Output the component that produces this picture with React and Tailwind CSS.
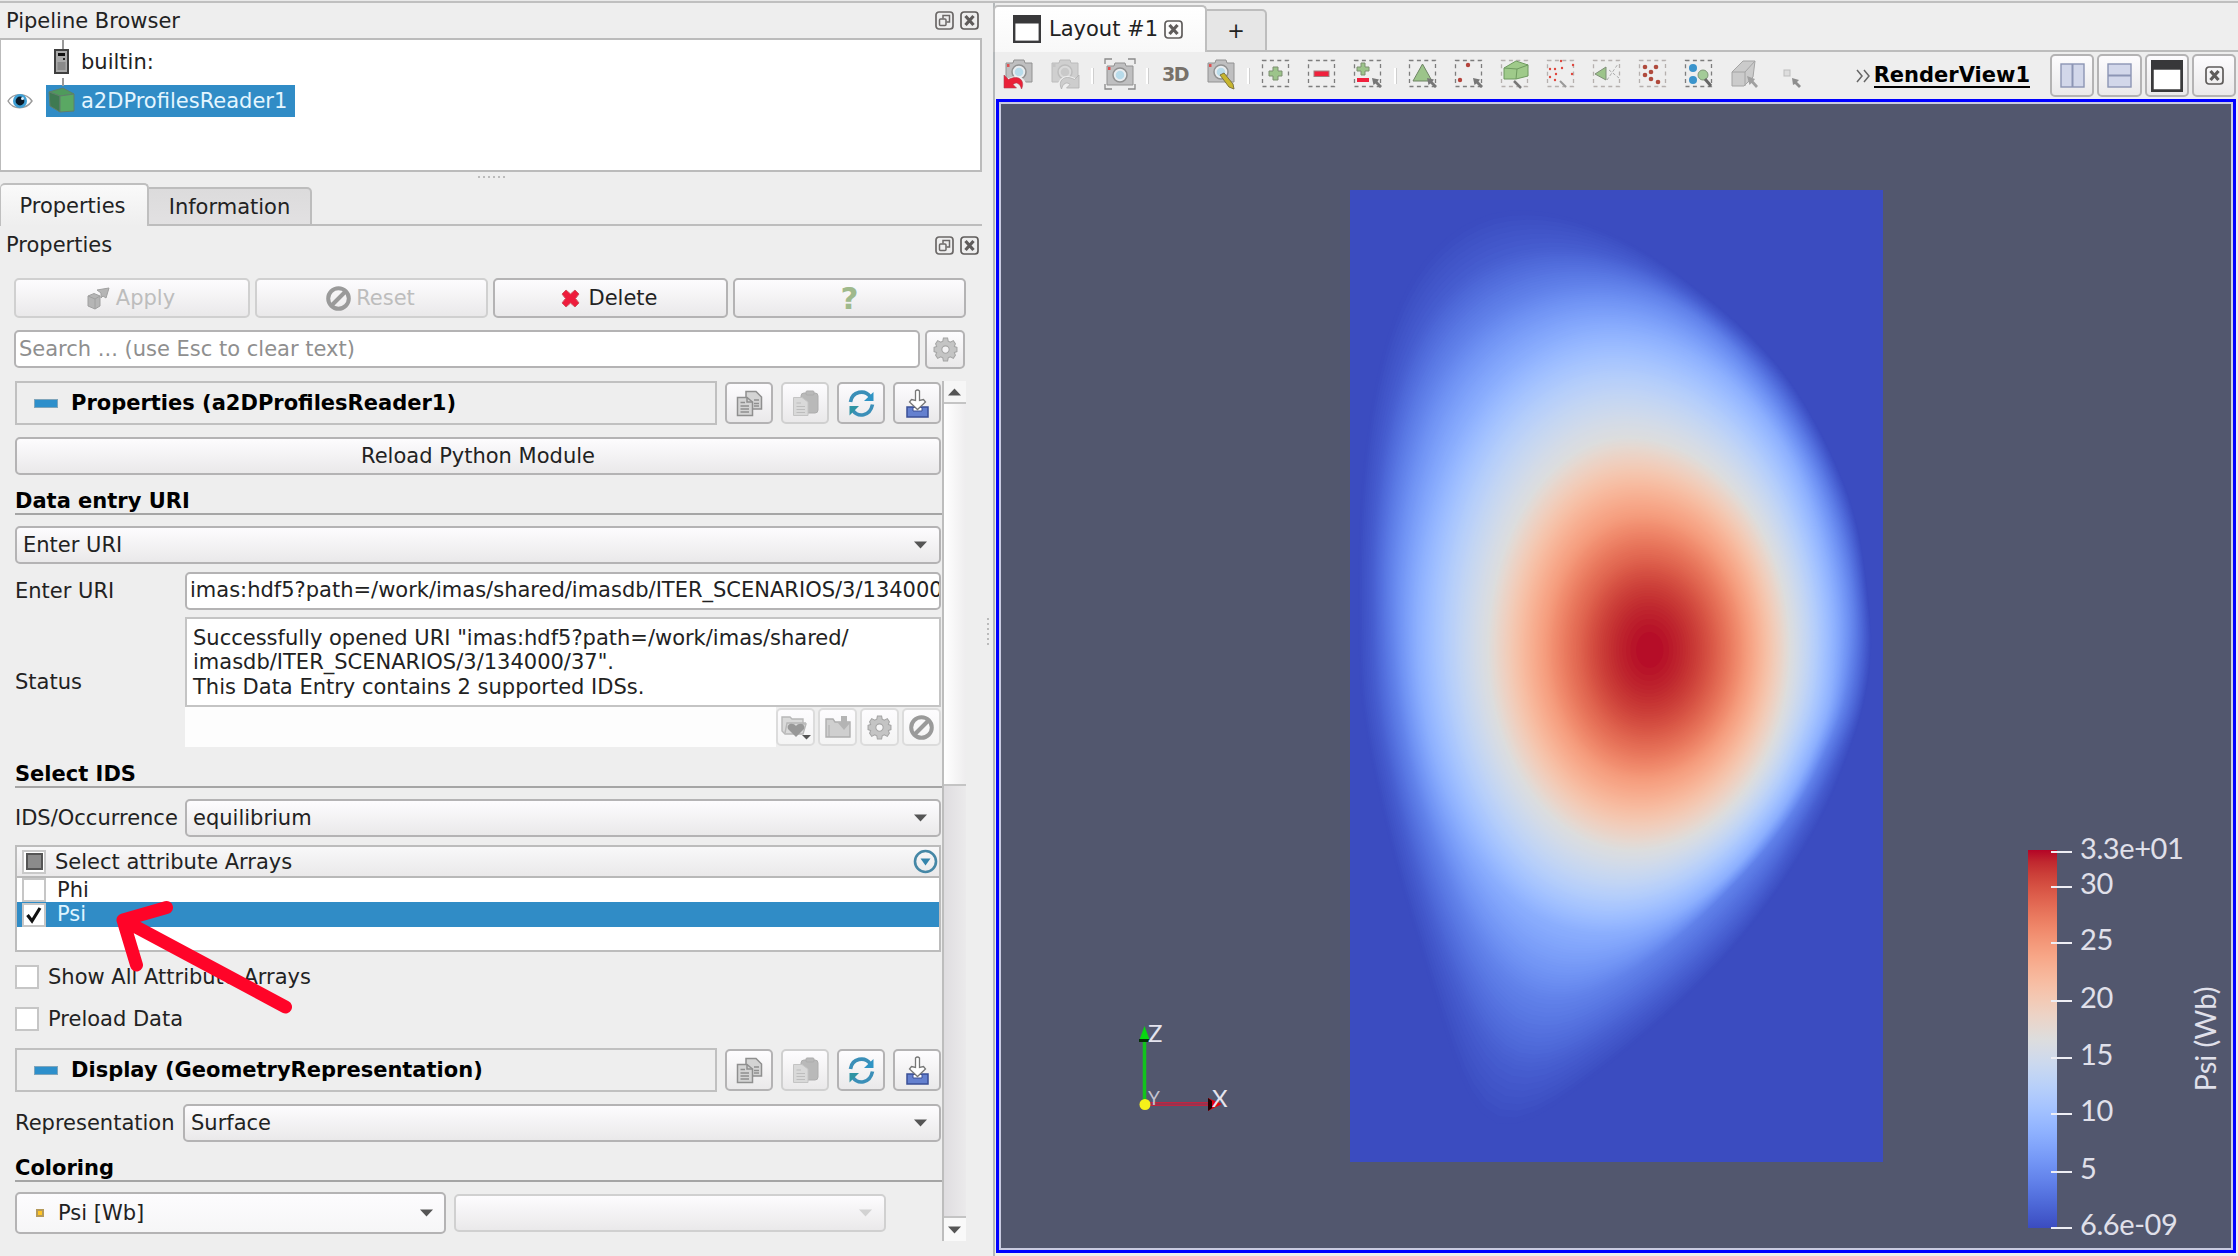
import { clsx } from 'clsx';

/* ---------- colour map ---------- */

// diverging "Cool to Warm" map, interpolated in Msh space
const mshToRgb = ([m, s, h]) => {
    const L = m * Math.cos(s);
    const a = m * Math.sin(s) * Math.cos(h);
    const b = m * Math.sin(s) * Math.sin(h);
    const fy = (L + 16) / 116;
    const inv = (f) => (f > 0.206893 ? f ** 3 : (f - 16 / 116) / 7.787);
    const x = 0.9505 * inv(fy + a / 500);
    const y = inv(fy);
    const z = 1.089 * inv(fy - b / 200);
    const rgb = [
        3.2406 * x - 1.5372 * y - 0.4986 * z,
        -0.9689 * x + 1.8758 * y + 0.0415 * z,
        0.0557 * x - 0.204 * y + 1.057 * z,
    ].map((c) => {
        const g = c > 0.0031308 ? 1.055 * c ** (1 / 2.4) - 0.055 : 12.92 * c;
        return Math.round(Math.min(1, Math.max(0, g)) * 255);
    });
    return `rgb(${rgb.join(',')})`;
};

const coolWarm = (t) => {
    if (t < 0.5) {
        const k = t * 2;
        return mshToRgb([80 + 8 * k, 1.08 * (1 - k), -1.1 - 0.561 * k]);
    }
    const k = (t - 0.5) * 2;
    return mshToRgb([88 - 8 * k, 1.08 * k, 1.061 - 0.561 * k]);
};

/* ---------- flux surfaces ---------- */

const CX = 300;
const CY = 460;
const STEPS = 180;

// closed near-elliptic surface from its four extents
const oval = (l, r, t, b, xt, xb) => Array.from({ length: 48 }, (_, i) => {
    const th = (i / 48) * 2 * Math.PI;
    const c = Math.cos(th);
    const s = Math.sin(th);
    const xv = s < 0 ? xt : xb;
    return [xv + (c > 0 ? r - xv : xv - l) * c, CY + (s > 0 ? b - CY : CY - t) * s];
});

const KEYS = [
    {
        v: 0,
        pts: [
            [521, 460], [516, 392], [497, 302], [468, 238], [426, 173], [386, 132], [334, 90], [296, 62],
            [254, 40], [200, 22], [143, 20], [85, 56], [54, 102], [32, 168], [17, 251], [10, 341],
            [9, 431], [14, 528], [28, 600], [45, 670], [68, 748], [92, 826], [114, 893], [143, 955],
            [190, 924], [240, 888], [296, 843], [353, 790], [413, 720], [458, 652], [493, 577], [512, 521],
        ],
    },
    {
        v: 0.04,
        pts: [
            [515, 460], [511, 390], [492, 306], [463, 242], [421, 178], [380, 137], [328, 97], [285, 73],
            [243, 60], [198, 56], [138, 70], [90, 108], [62, 155], [42, 215], [30, 280], [24, 345],
            [23, 431], [28, 520], [43, 596], [62, 668], [85, 740], [112, 808], [136, 860], [162, 890],
            [200, 880], [245, 853], [298, 815], [354, 767], [408, 707], [449, 643], [485, 573], [506, 521],
        ],
    },
    {
        v: 0.125,
        pts: [
            [503, 460], [499, 383], [482, 315], [453, 250], [410, 187], [370, 145], [314, 108], [262, 94],
            [205, 97], [150, 118], [108, 155], [77, 205], [56, 270], [44, 341], [41, 431], [48, 515],
            [64, 592], [90, 668], [120, 738], [150, 785], [182, 810], [216, 812], [262, 793], [318, 755],
            [375, 703], [426, 646], [470, 573], [494, 515],
        ],
    },
    {
        v: 0.25,
        pts: [
            [485, 460], [480, 386], [463, 321], [429, 248], [382, 192], [334, 158], [288, 142], [242, 140],
            [192, 158], [146, 194], [112, 242], [87, 302], [72, 367], [67, 444], [75, 528], [98, 608],
            [132, 672], [172, 716], [215, 738], [263, 743], [315, 729], [370, 692], [417, 640], [458, 571],
            [479, 515],
        ],
    },
    { v: 0.5, pts: oval(138, 440, 247, 661, 277, 282) },
    { v: 0.75, pts: oval(196, 396, 326, 589, 292, 292) },
    { v: 0.875, pts: oval(231, 367, 370, 549, 297, 297) },
];

// radius at evenly spaced angles, lightly smoothed
const toRadii = (pts) => {
    const polar = pts
        .map(([x, y]) => ({ a: (Math.atan2(y - CY, x - CX) + 2 * Math.PI) % (2 * Math.PI), r: Math.hypot(x - CX, y - CY) }))
        .sort((p, q) => p.a - q.a);
    const wrap = (p, n) => ({ a: p.a + n * 2 * Math.PI, r: p.r });
    const ring = [...polar.slice(-2).map((p) => wrap(p, -1)), ...polar, ...polar.slice(0, 2).map((p) => wrap(p, 1))];
    const slope = (j) => (ring[j + 1].r - ring[j - 1].r) / (ring[j + 1].a - ring[j - 1].a);
    let radii = Array.from({ length: STEPS }, (_, i) => {
        const a = (i / STEPS) * 2 * Math.PI;
        const j = ring.findIndex((p) => p.a > a) - 1;
        const p = ring[j];
        const q = ring[j + 1];
        const d = q.a - p.a;
        const t = (a - p.a) / d;
        return (2 * t ** 3 - 3 * t ** 2 + 1) * p.r
            + (t ** 3 - 2 * t ** 2 + t) * d * slope(j)
            + (3 * t ** 2 - 2 * t ** 3) * q.r
            + (t ** 3 - t ** 2) * d * slope(j + 1);
    });
    for (let n = 0; n < 6; n += 1) {
        radii = radii.map((r, i) => (radii[(i + STEPS - 1) % STEPS] + 2 * r + radii[(i + 1) % STEPS]) / 4);
    }
    return radii;
};

const RINGS = [
    ...KEYS.map(({ v, pts }) => ({ s: Math.sqrt(1 - v), radii: toRadii(pts) })),
    { s: 0, radii: Array(STEPS).fill(0) },
];

const surfacePath = (v) => {
    const s = Math.sqrt(1 - v);
    let i = 0;
    while (i < RINGS.length - 2 && s < RINGS[i + 1].s) i += 1;
    const p = RINGS[i];
    const q = RINGS[i + 1];
    const k = (p.s - s) / (p.s - q.s);
    const pts = p.radii.map((r, n) => {
        const a = (n / STEPS) * 2 * Math.PI;
        const rad = r + (q.radii[n] - r) * k;
        return `${(CX + rad * Math.cos(a)).toFixed(1)} ${(CY + rad * Math.sin(a)).toFixed(1)}`;
    });
    return `M${pts.join('L')}Z`;
};

const LEVELS = Array.from({ length: 200 }, (_, i) => i / 200);

function FluxPlot() {
    return (
        <svg width="533" height="972" viewBox="0 0 533 972" className="block bg-[#3b4cc0]">
            {LEVELS.map((v) => <path key={v} d={surfacePath(v)} fill={coolWarm(v)} />)}
        </svg>
    );
}

/* ---------- icons ---------- */

const FloatIcon = () => (
    <svg width="19" height="19" viewBox="0 0 19 19" fill="none" stroke="#6b6867">
        <rect x="1" y="1" width="17" height="17" rx="3" strokeWidth="1.7" />
        <rect x="4.5" y="8" width="6.5" height="6.5" rx="1" strokeWidth="1.5" />
        <path d="M8 7.500V4.500H14.500V11H11.500" strokeWidth="1.5" />
    </svg>
);

const CloseIcon = () => (
    <svg width="19" height="19" viewBox="0 0 19 19" fill="none" stroke="#5f5c5b">
        <rect x="1" y="1" width="17" height="17" rx="3" strokeWidth="1.7" />
        <path d="M5.500 5L13.500 14M13.500 5L5.500 14" strokeWidth="3.200" />
    </svg>
);

const ServerIcon = () => (
    <svg width="15" height="25" viewBox="0 0 15 25">
        <rect x="1" y="1" width="13" height="23" fill="#a9a9a9" stroke="#3f3f3f" strokeWidth="2" />
        <rect x="4" y="4" width="7" height="3" fill="#111" />
        <rect x="9" y="9" width="2" height="2" fill="#222" />
        <rect x="3.500" y="13" width="8" height="8" fill="#8a8a8a" />
    </svg>
);

const EyeIcon = () => (
    <svg width="26" height="18" viewBox="0 0 26 18">
        <path d="M1 9C6 1 19 0 25 9C19 18 6 18 1 9Z" fill="#fff" stroke="#9b9b9b" strokeWidth="1.400" />
        <circle cx="13" cy="9" r="7" fill="#3f9fd4" />
        <circle cx="13" cy="9" r="4.400" fill="#0a1a28" />
        <circle cx="15.500" cy="6.500" r="1.500" fill="#d8f0ff" />
    </svg>
);

const CubeIcon = () => (
    <svg width="27" height="27" viewBox="0 0 27 27" stroke="#5f7f6a" strokeWidth="1">
        <path d="M1 5L15 1L26 7L12 9Z" fill="#4f9a5c" />
        <path d="M1 5L12 9V25L2 19Z" fill="#3f7a52" />
        <path d="M12 9L26 7V24L12 25Z" fill="#5aa863" />
    </svg>
);

const GearIcon = ({ size = 25 }) => (
    <svg width={size} height={size} viewBox="0 0 24 24">
        <path
            fillRule="evenodd"
            fill="#c4c4c4"
            stroke="#a4a4a4"
            strokeWidth="1"
            d="M10 1h4l.6 3 2 .9L19.500 3.500 21.500 6.500 20.500 9 23 10v4l-2.500 1 1 2.500-2 3-2.900-1.400-2 .9L14 23h-4l-.6-3-2-.9L4.500 20.500 2.500 17.500 3.500 15 1 14v-4l2.500-1-1-2.500 2-3 2.900 1.400 2-.9zM12 8.500a3.500 3.500 0 100 7 3.500 3.500 0 000-7z"
        />
    </svg>
);

const ForbidIcon = () => (
    <svg width="25" height="25" viewBox="0 0 25 25" fill="none" stroke="#9a9a9a">
        <circle cx="12.500" cy="12.500" r="10.300" strokeWidth="4" />
        <path d="M19 6L6 19" strokeWidth="4" />
    </svg>
);

const ApplyIcon = () => (
    <svg width="23" height="23" viewBox="0 0 23 23" fill="#b5b5b5" stroke="#a0a0a0">
        <path d="M1 9L7 6.500L13 9V19L8 22L1 19Z" />
        <path d="M1 9L8 12L13 9M8 12V22" fill="none" />
        <path d="M10 3L22 1L19 11L16 9L14 11V6Z" />
    </svg>
);

const DeleteIcon = () => (
    <svg width="19" height="19" viewBox="0 0 19 19">
        <path d="M5 1L9.500 5L14 1L18 5L14.500 9.500L18 14L14 18L9.500 14L5 18L1 14L4.500 9.500L1 5Z" fill="#ee1c3c" stroke="#d0555f" />
    </svg>
);

const CopyIcon = () => (
    <svg width="27" height="27" viewBox="0 0 27 27" fill="#d4d4d4" stroke="#8f8f8f" strokeWidth="1.500">
        <path d="M10 1.500H20L25.500 7V19H10Z" />
        <path d="M1.500 7.500H11L16.500 12V25.500H1.500Z" />
        <path d="M11 7.500V12H16.500M4.500 12.500H9M4.500 16H13M4.500 19H13M4.500 22H13M18 10H23M18 13.500H23M18 16H23" fill="none" />
    </svg>
);

const PasteIcon = () => (
    <svg width="27" height="27" viewBox="0 0 27 27" fill="#b9b9b9" stroke="#adadad">
        <rect x="9" y="3" width="17" height="20" rx="3" />
        <rect x="14" y="1" width="8" height="4" rx="1" />
        <path d="M1.500 7.500H10L16 12V25.500H1.500Z" fill="#d9d9d9" stroke="#c4c4c4" />
        <path d="M4.500 13H9M4.500 16.500H13M4.500 19.500H13M4.500 22.500H13" fill="none" stroke="#bdbdbd" />
    </svg>
);

const RefreshIcon = () => (
    <svg width="27" height="27" viewBox="0 0 27 27" fill="none" stroke="#3b8fb8" strokeWidth="3.600">
        <path d="M2.500 12C4 1 17 -1 22.500 7" />
        <path d="M24.500 14.500C22 26.500 10 28 4.500 20" />
        <path d="M25.500 2V11H16Z" fill="#2f94c4" stroke="none" />
        <path d="M1.500 25.500V16H11Z" fill="#2f94a4" stroke="none" />
    </svg>
);

const SaveIcon = () => (
    <svg width="23" height="29" viewBox="0 0 23 29">
        <rect x="1" y="18" width="21" height="10" fill="#6480cf" stroke="#3a4f96" strokeWidth="1.500" />
        <path d="M7 18.500H16V22H7Z" fill="#fff" stroke="#3a4f96" />
        <path d="M9.500 2Q11.500 0 13.500 2V11.500L17.500 10.500L19.500 13L11.500 20.500L3.500 13L5.500 10.500L9.500 11.500Z" fill="#fff" stroke="#777" strokeWidth="1.300" />
    </svg>
);

const FolderHeartIcon = () => (
    <svg width="30" height="26" viewBox="0 0 30 26">
        <path d="M1 3H9L11 5H22V10H25L22 20H4L1 17Z" fill="#dadada" stroke="#b8b8b8" strokeWidth="1.400" />
        <path d="M4 19L6 9H25" fill="none" stroke="#b8b8b8" strokeWidth="1.400" />
        <path d="M15 23L7 15C5 10 12 8 15 12C18 8 25 10 23 15Z" fill="#989898" />
        <path d="M21 21H30L25.500 25.500Z" fill="#555" />
    </svg>
);

const FolderDownIcon = () => (
    <svg width="26" height="24" viewBox="0 0 26 24">
        <path d="M1 4H8L10 7H25V22H1Z" fill="#cfcfcf" stroke="#aeaeae" strokeWidth="1.400" />
        <path d="M4 22V10" stroke="#aeaeae" />
        <path d="M16 1H22V8H25L19 15L13 8H16Z" fill="#b4b4b4" />
    </svg>
);

const WindowIcon = ({ width = 28, height = 28 }) => (
    <svg width={width} height={height} viewBox="0 0 28 28" preserveAspectRatio="none">
        <rect x="1.200" y="1.200" width="25.600" height="25.600" fill="#fff" stroke="#3a3a3c" strokeWidth="2.400" />
        <rect x="0" y="0" width="28" height="8.500" fill="#38383a" />
    </svg>
);

const SplitIcon = ({ horizontal }) => (
    <svg width="25" height="25" viewBox="0 0 25 25" fill="#d2d7ea" stroke="#8c95b4" strokeWidth="1.400">
        <rect x="1" y="1" width="23" height="23" />
        <path d={horizontal ? 'M1 12.500H24' : 'M12.500 1V24'} strokeWidth="2" />
    </svg>
);

const Arrow = ({ faded, className }) => (
    <svg width="13" height="8" viewBox="0 0 13 8" className={className}>
        <path d="M0 0.500H13L6.500 7.500Z" fill={faded ? '#d2d2d2' : '#555'} />
    </svg>
);

function Camera({ kind }) {
    const dim = kind === 'redo';
    return (
        <svg width="32" height="32" viewBox="0 0 32 32">
            {kind === 'capture' && (
                <path d="M1 6V1H8M24 1H31V6M1 26V31H8M24 31H31V26" fill="none" stroke="#8a8a8a" strokeWidth="1.300" />
            )}
            <g transform={kind === 'capture' ? 'translate(1 3)' : 'translate(1 0)'}>
                <path d="M2 5H9L10 2H20L21 5H28V24H2Z" fill={dim ? '#cfcfcf' : '#bfbfc0'} stroke={dim ? '#bcbcbc' : '#929292'} strokeLinejoin="round" />
                <rect x="3" y="6" width="2.500" height="3" fill={dim ? '#c4c4c4' : '#e05050'} />
                <circle cx="15" cy="14" r="7" fill={dim ? '#dadada' : '#e9edf0'} stroke={dim ? '#bdbdbd' : '#919191'} strokeWidth="1.500" />
                <circle cx="15" cy="14" r="4.300" fill={dim ? '#c9c9c9' : '#b8dbea'} />
            </g>
            {/* lower part of the body is knocked out behind the curved arrow */}
            {kind === 'undo' && (
                <>
                    <path d="M0 20H6Q18 14 23 25V32H0Z" fill="#eee" />
                    <path d="M1 17V30H13.500L10 26.500C13 23.500 17 25 18.500 31C22.500 23 16 16 5.500 21.500Z" fill="#ea2038" stroke="#b04050" strokeWidth=".6" />
                </>
            )}
            {kind === 'redo' && (
                <>
                    <path d="M32 20H26Q14 14 9 25V32H32Z" fill="#eee" />
                    <path d="M30 17V30H17.500L21 26.500C18 23.500 14 25 12.500 31C8.500 23 15 16 25.500 21.500Z" fill="#cdcdcd" stroke="#b0b0b0" strokeWidth=".8" />
                </>
            )}
            {kind === 'edit' && <path d="M15 17L19 15L28 26L29 31L24 29Z" fill="#c8b62e" stroke="#7d7440" />}
        </svg>
    );
}

const Cursor = () => <path d="M20 20L27 21.500L25.500 23.500L30 28L28 30L23.500 25.500L21.500 27Z" fill="#777" />;

function Select({ kind }) {
    const boxed = !['block', 'point'].includes(kind);
    const dots = (color, list, r = 1.700) => list.map(([x, y]) => <circle key={`${x}-${y}`} cx={x} cy={y} r={r} fill={color} />);
    return (
        <svg width="32" height="32" viewBox="0 0 32 32">
            {boxed && (
                <rect
                    x="2.500"
                    y="2.500"
                    width="26"
                    height="26"
                    fill="none"
                    stroke={['frustum', 'frustumPts', 'poly', 'polyPts'].includes(kind) ? '#b5b0ae' : '#7d7d7d'}
                    strokeWidth="1.300"
                    strokeDasharray="4 3.400"
                />
            )}
            {kind === 'plus' && <path d="M13 9H18V13H22V18H18V22H13V18H9V13H13Z" fill="#9cc48a" stroke="#7c8f70" />}
            {kind === 'minus' && <rect x="8" y="13" width="15" height="5.500" fill="#f0203c" stroke="#a08080" />}
            {kind === 'toggle' && (
                <>
                    <path d="M9 5H13V9H17V13H13V17H9V13H5V9H9Z" fill="#9cc48a" stroke="#7c8f70" />
                    <rect x="5" y="20" width="12" height="4" fill="#f0203c" />
                    <Cursor />
                </>
            )}
            {kind === 'cells' && <><path d="M15.500 6L25 23H6Z" fill="#9cc48a" stroke="#6e8464" /><Cursor /></>}
            {kind === 'points' && <>{dots('#b5443c', [[15, 7], [7, 22]], 2.200)}<Cursor /></>}
            {kind === 'frustum' && (
                <>
                    <path d="M5 10L17 3L29 7V18L17 21H5Z" fill="#9fca8a" stroke="#6f9a60" />
                    <path d="M5 10L18 11L29 7M18 11L17 21" fill="none" stroke="#6f9a60" />
                    <path d="M15 23L22 30" stroke="#777" strokeWidth="2.500" />
                </>
            )}
            {kind === 'frustumPts' && (
                <>
                    {dots('#e0453c', [[5, 11], [10, 11], [16, 3], [5, 19], [10, 22], [17, 10], [28, 7], [27, 16], [11, 16]], 1.200)}
                    <path d="M15 23L21 29" stroke="#999" strokeWidth="2" />
                </>
            )}
            {kind === 'poly' && <><path d="M4 16L15 9V22Z" fill="#9cc48a" stroke="#7f8f78" /><path d="M16 22L27 6M18 12L28 20" stroke="#aaa" strokeDasharray="3 2" /></>}
            {kind === 'polyPts' && dots('#b04a3c', [[8, 9], [19, 9], [14, 14], [8, 17], [14, 21], [21, 24]], 2.300)}
            {kind === 'query' && (
                <>
                    {dots('#3a94cc', [[10, 10], [10, 22]], 4)}
                    <circle cx="20" cy="17" r="5" fill="#a3cb98" stroke="#7f9878" />
                    <path d="M22 21L28 28" stroke="#666" strokeWidth="3" />
                </>
            )}
            {kind === 'block' && (
                <>
                    <path d="M3 14L14 3H26L24 19L15 28H3Z" fill="#cbcbcb" stroke="#a4a4a4" />
                    <path d="M3 14H16L26 3M16 14V28" fill="none" stroke="#a4a4a4" />
                    <path d="M18 18L26 21L24.500 23L29 28L27 30L22.500 25L20.500 27Z" fill="#a0a0a0" />
                </>
            )}
            {kind === 'point' && (
                <>
                    <rect x="9" y="12" width="6" height="6" fill="#ddd" stroke="#bdbdbd" />
                    <path d="M17 20L24 22L22 24L26 28L24 30L20 26L18 27Z" fill="#8e8e8e" />
                </>
            )}
        </svg>
    );
}

/* ---------- left dock ---------- */

function DockTitle({ children, className }) {
    return (
        <div className={clsx('flex w-[982px] items-center pl-[6px] pr-[3px]', className)}>
            <span className="flex-1">{children}</span>
            <div className="flex gap-[6px]"><FloatIcon /><CloseIcon /></div>
        </div>
    );
}

function Button({ children, disabled, className }) {
    return (
        <button
            className={clsx(
                'flex items-center justify-center rounded-[5px] border-2 bg-linear-to-b from-[#fdfcfe] to-[#eae9ea]',
                disabled ? 'border-[#d0d0d0] text-[#bdbdbd]' : 'border-[#b4b3b4]',
                className,
            )}
        >
            {children}
        </button>
    );
}

function Combo({ children, className }) {
    return (
        <Button className={clsx('h-[38px] !justify-between pl-[6px] pr-[12px]', className)}>
            <span>{children}</span>
            <Arrow />
        </Button>
    );
}

function GroupHeader({ children, className }) {
    return (
        <div className={clsx('flex h-11 w-[926px] items-center gap-2', className)}>
            <div className="flex h-full w-[702px] items-center border-2 border-[#c0c0c0] pl-[17px] font-bold text-black">
                <span className="mr-[13px] h-[9px] w-6 border border-[#7fa5bb] bg-[#2d8fcb]" />
                <span>{children}</span>
            </div>
            <Button className="h-[42px] w-12"><CopyIcon /></Button>
            <Button disabled className="h-[42px] w-12"><PasteIcon /></Button>
            <Button className="h-[42px] w-12"><RefreshIcon /></Button>
            <Button className="h-[42px] w-12"><SaveIcon /></Button>
        </div>
    );
}

const SectionTitle = ({ children }) => (
    <h3 className="flex h-[41px] w-[927px] items-end border-b-2 border-[#a5a5a5] font-bold leading-6 text-black">{children}</h3>
);

const CheckRow = ({ children, className }) => (
    <label className={clsx('flex h-6 items-center gap-[9px]', className)}>
        <span className="h-6 w-6 border-2 border-[#c6c6c6] bg-white" />
        {children}
    </label>
);

function PipelineTree() {
    return (
        <div className="relative h-[134px] w-[982px] border-2 border-l border-[#bbb] bg-white pt-[7px]">
            <div className="absolute left-[61px] top-0 h-[9px] w-[2px] bg-[#999]" />
            <div className="flex h-[29px] items-center pl-[53px]">
                <ServerIcon />
                <span className="ml-[12px]">builtin:</span>
            </div>
            <div className="absolute left-[61px] top-[38px] h-[8px] w-[2px] bg-[#999]" />
            <div className="mt-[9px] flex h-8 items-center">
                <span className="ml-[6px]"><EyeIcon /></span>
                <div className="ml-[13px] flex h-8 w-[249px] items-center bg-[#308cc6] pb-px pl-[2px] text-[#e4f6ff]">
                    <CubeIcon />
                    <span className="ml-[6px]">a2DProfilesReader1</span>
                </div>
            </div>
        </div>
    );
}

function StatusField() {
    return (
        <div className="flex w-[926px] items-center">
            <span className="w-[170px]">Status</span>
            <div className="w-[756px]">
                <div className="h-[90px] whitespace-nowrap border-2 border-[#c4c4c4] bg-white pl-[6px] pt-[7px] leading-[24.4px]">
                    Successfully opened URI "imas:hdf5?path=/work/imas/shared/<br />
                    imasdb/ITER_SCENARIOS/3/134000/37".<br />
                    This Data Entry contains 2 supported IDSs.
                </div>
                <div className="flex h-10 items-center">
                    <div className="h-full flex-1 bg-[#fdfdfd]" />
                    <div className="flex gap-[3px]">
                        <Button disabled className="h-[38px] w-[39px] !border-[#dcdcdc] !to-[#f4f4f4]"><FolderHeartIcon /></Button>
                        <Button disabled className="h-[38px] w-[39px] !border-[#dcdcdc] !to-[#f4f4f4]"><FolderDownIcon /></Button>
                        <Button disabled className="h-[38px] w-[39px] !border-[#dcdcdc] !to-[#f4f4f4]"><GearIcon /></Button>
                        <Button disabled className="h-[38px] w-[39px] !border-[#dcdcdc] !to-[#f4f4f4]"><ForbidIcon /></Button>
                    </div>
                </div>
            </div>
        </div>
    );
}

function ArrayList() {
    return (
        <div className="mt-[9px] h-[107px] w-[926px] border-2 border-[#bcbcbc] bg-white">
            <div className="flex h-[31px] items-center border-b-2 border-[#b8b8b8] bg-linear-to-b from-[#f8f8f9] to-[#eae9ea] pl-[5px] pr-px">
                <span className="flex h-6 w-6 items-center justify-center border-2 border-[#c9c9c9] bg-white">
                    <span className="h-[17px] w-[17px] border-2 border-[#555] bg-[#8b8b8b]" />
                </span>
                <span className="ml-[9px] flex-1">Select attribute Arrays</span>
                <svg width="25" height="25" viewBox="0 0 25 25">
                    <circle cx="12.500" cy="12.500" r="10.500" fill="none" stroke="#4587a6" strokeWidth="2.600" />
                    <path d="M7.500 9.500H17.500L12.500 16.500Z" fill="#3584ab" />
                </svg>
            </div>
            <div className="flex h-6 items-center pl-[5px]">
                <span className="h-6 w-6 border-2 border-[#c6c6c6] bg-white" />
                <span className="ml-[11px]">Phi</span>
            </div>
            <div className="flex h-[25px] items-center bg-[#308cc6] pl-[5px] text-[#dff4ff]">
                <span className="flex h-[24px] w-6 items-center justify-center border-2 border-[#c6c6c6] bg-white">
                    <svg width="16" height="18" viewBox="0 0 16 18"><path d="M1.500 9L6 15L14 2" fill="none" stroke="#111" strokeWidth="3.200" /></svg>
                </span>
                <span className="-mt-[2px] ml-[11px]">Psi</span>
            </div>
        </div>
    );
}

function Scrollbar() {
    return (
        <div className="flex h-[860px] w-6 flex-col border-l-2 border-[#bdbdbd] bg-[#e3e1e3]">
            <div className="flex h-[23px] items-center justify-center border-b-2 border-[#c4c4c4] bg-[#f6f6f6] pr-px">
                <Arrow className="rotate-180" />
            </div>
            <div className="h-[382px] border-b-2 border-[#c4c4c4] bg-linear-to-r from-white to-[#eeedee]" />
            <div className="flex-1 bg-linear-to-r from-[#dfdde0] to-[#ebeaeb]" />
            <div className="flex h-[25px] items-center justify-center border-t-2 border-[#c4c4c4] bg-[#f9f9f9] pr-px">
                <Arrow />
            </div>
        </div>
    );
}

function LeftDock() {
    return (
        <aside className="w-[993px] shrink-0">
            <DockTitle className="h-[35px]">Pipeline Browser</DockTitle>
            <PipelineTree />
            <div className="flex h-[11px] gap-[3px] pl-[478px] pt-[4px]">
                {[0, 1, 2, 3, 4, 5].map((i) => <span key={i} className="h-[2px] w-[2px] bg-[#bbb]" />)}
            </div>

            <div className="flex h-[43px] w-[982px] items-end">
                <div className="flex h-[43px] w-[149px] items-center justify-center rounded-t-[5px] border-2 border-b-0 border-l border-[#bfbfbf] bg-linear-to-b from-[#fafafa] to-[#eee] pr-[3px]">Properties</div>
                <div className="flex h-[39px] w-[163px] items-center justify-center rounded-tr-[5px] border-2 border-l-0 border-[#bdbdbd] bg-linear-to-b from-[#dcdbdc] to-[#e2e1e2]">Information</div>
                <div className="h-[2px] flex-1 bg-[#bdbdbd]" />
            </div>

            <DockTitle className="h-[38px]">Properties</DockTitle>

            <div className="ml-[14px] mt-[14px] flex h-10 w-[952px] gap-[5px]">
                <Button disabled className="w-[236px] gap-[6px] pr-[2px]"><ApplyIcon />Apply</Button>
                <Button disabled className="w-[233px] gap-[5px] pr-[2px]"><ForbidIcon />Reset</Button>
                <Button className="w-[235px] gap-[9px] pr-[3px]"><DeleteIcon />Delete</Button>
                <Button className="flex-1 text-[31px] font-bold text-[#9fb98c]">?</Button>
            </div>

            <div className="ml-[14px] mt-[12px] flex h-[39px] w-[951px] items-start gap-[5px]">
                <div className="flex h-[38px] w-[906px] items-center rounded-[5px] border-2 border-[#b4b3b4] bg-white pl-[3px] text-[#8f8f8f]">Search ... (use Esc to clear text)</div>
                <Button className="h-[39px] w-10"><GearIcon /></Button>
            </div>

            <div className="ml-[15px] mt-[12px] flex">
                <div className="w-[927px]">
                    <GroupHeader>Properties (a2DProfilesReader1)</GroupHeader>
                    <Button className="mt-[12px] h-[38px] w-[926px]">Reload Python Module</Button>

                    <div className="-mt-px"><SectionTitle>Data entry URI</SectionTitle></div>
                    <Combo className="mt-[11px] w-[926px]">Enter URI</Combo>
                    <div className="mt-[8px] flex w-[926px] items-center">
                        <span className="w-[170px]">Enter URI</span>
                        <div className="h-[38px] w-[756px] overflow-hidden whitespace-nowrap rounded-[5px] border-2 border-[#b4b3b4] bg-white pl-[3px] leading-[33px]">
                            imas:hdf5?path=/work/imas/shared/imasdb/ITER_SCENARIOS/3/134000
                        </div>
                    </div>
                    <div className="mt-[7px]"><StatusField /></div>

                    <SectionTitle>Select IDS</SectionTitle>
                    <div className="mt-[11px] flex w-[926px] items-center">
                        <span className="w-[170px]">IDS/Occurrence</span>
                        <Combo className="w-[756px]">equilibrium</Combo>
                    </div>
                    <div className="-mt-px"><ArrayList /></div>
                    <CheckRow className="mt-[13px]">Show All Attribute Arrays</CheckRow>
                    <CheckRow className="mt-[18px]">Preload Data</CheckRow>

                    <GroupHeader className="mt-[17px]">Display (GeometryRepresentation)</GroupHeader>
                    <div className="mt-[12px] flex w-[926px] items-center">
                        <span className="w-[168px]">Representation</span>
                        <Combo className="w-[758px]">Surface</Combo>
                    </div>

                    <div className="-mt-px"><SectionTitle>Coloring</SectionTitle></div>
                    <div className="mt-[10px] flex items-center gap-2">
                        <Button className="h-[42px] w-[431px] !justify-start !to-[#f6f6f7] pl-[19px] pr-[11px]">
                            <span className="h-[8px] w-[8px] border-2 border-[#b59a5a] bg-[#ffc425]" />
                            <span className="ml-[14px] flex-1 text-left">Psi [Wb]</span>
                            <Arrow />
                        </Button>
                        <Button disabled className="h-[38px] w-[432px] !justify-end pr-[12px]"><Arrow faded /></Button>
                    </div>
                </div>
                <Scrollbar />
                <div className="ml-[21px] mt-[237px] flex flex-col gap-[3px]">
                    {[0, 1, 2, 3, 4, 5].map((i) => <span key={i} className="h-[2px] w-[2px] bg-[#bbb]" />)}
                </div>
            </div>
        </aside>
    );
}

/* ---------- render view ---------- */

const Separator = () => <span className="flex w-[9px] shrink-0 justify-center"><span className="h-4 w-[3px] border-r border-[#cfcfcf] bg-white" /></span>;
const Slot = ({ children }) => <span className="flex w-[46px] shrink-0 items-center justify-center pb-[3px]">{children}</span>;

function ViewToolbar() {
    return (
        <div className="flex h-[47px] items-center pl-px">
            <Slot><Camera kind="undo" /></Slot>
            <Slot><Camera kind="redo" /></Slot>
            <Separator />
            <Slot><Camera kind="capture" /></Slot>
            <Separator />
            <Slot><span className="text-[19px] font-bold tracking-[-1.500px] text-[#77716a]">3D</span></Slot>
            <Slot><Camera kind="edit" /></Slot>
            <Separator />
            {['plus', 'minus', 'toggle'].map((k) => <Slot key={k}><Select kind={k} /></Slot>)}
            <Separator />
            {['cells', 'points', 'frustum', 'frustumPts', 'poly', 'polyPts', 'query', 'block', 'point'].map((k) => (
                <Slot key={k}><Select kind={k} /></Slot>
            ))}
            <svg width="15" height="14" viewBox="0 0 15 14" fill="none" stroke="#666" strokeWidth="1.500" className="ml-auto">
                <path d="M1 1L6 7L1 13M8 1L13 7L8 13" />
            </svg>
            <span className="ml-[3px] border-b-2 border-black text-[21px] font-bold leading-[22px] text-black">RenderView1</span>
            <div className="ml-[20px] mr-[2px] flex gap-[3px]">
                <Button className="h-[43px] w-[44px]"><SplitIcon /></Button>
                <Button className="h-[43px] w-[45px]"><SplitIcon horizontal /></Button>
                <Button className="h-[43px] w-[44px]"><WindowIcon width={32} height={32} /></Button>
                <Button className="h-[43px] w-[44px]"><CloseIcon /></Button>
            </div>
        </div>
    );
}

const TICKS = [
    { label: '3.3e+01', y: 2 },
    { label: '30', y: 37 },
    { label: '25', y: 93 },
    { label: '20', y: 151 },
    { label: '15', y: 208 },
    { label: '10', y: 264 },
    { label: '5', y: 322 },
    { label: '6.6e-09', y: 378 },
];

const RAMP = `linear-gradient(to top, ${Array.from({ length: 33 }, (_, i) => coolWarm(i / 32)).join(', ')})`;

function ColorLegend() {
    return (
        <div className="absolute left-[1027px] top-[746px] h-[378px] w-[29px] font-['Lato'] text-[29px] text-[#e0e0ea]">
            <div className="h-full w-full" style={{ backgroundImage: RAMP }} />
            {TICKS.map(({ label, y }) => (
                <div key={label} className="absolute left-[23px] flex h-0 items-center whitespace-nowrap" style={{ top: y }}>
                    <span className="h-[2px] w-[21px] bg-[#eeeef4]" />
                    <span className="-mt-[9px] ml-[8px] tracking-[-0.400px]">{label}</span>
                </div>
            ))}
            <span className="absolute left-[177px] top-[189px] -translate-x-1/2 -translate-y-1/2 -rotate-90 whitespace-nowrap text-[29px]">Psi (Wb)</span>
        </div>
    );
}

function OrientationAxes() {
    return (
        <svg width="120" height="110" viewBox="0 0 120 110" className="absolute left-[119px] top-[906px]">
            <path d="M25 94H92" stroke="#c22440" strokeWidth="4" />
            <path d="M27 94H92" stroke="#6b4560" strokeWidth="1" />
            <path d="M88 88V101L102 94Z" fill="#e00010" />
            <path d="M88 88V101L92 98V91Z" fill="#200" />
            <path d="M24.500 92V30" stroke="#12c41c" strokeWidth="3.500" />
            <path d="M19 31L24.500 16L30 31Z" fill="#08d810" />
            <path d="M19 29H30V32H19Z" fill="#063006" />
            <circle cx="25" cy="94.500" r="5.500" fill="#f6f01a" />
            <g fill="#e4e4ee" fontFamily="Lato" fontSize="24">
                <text x="28" y="32">Z</text>
                <text x="92" y="97">X</text>
                <text x="28" y="95" fontSize="19" fill="#c4c4d0">Y</text>
            </g>
        </svg>
    );
}

function RenderPane() {
    return (
        <main className="flex flex-1 flex-col border-l-2 border-[#b4b8ba]">
            <div className="flex h-[49px] items-end pt-[2px]">
                <div className="-ml-[2px] flex h-[47px] w-[214px] items-center rounded-t-[5px] border-2 border-b-0 border-[#bfbfbf] bg-linear-to-b from-white to-[#f8f8f8] pb-[1px] pl-[18px]">
                    <WindowIcon />
                    <span className="ml-[8px] w-[115px] whitespace-nowrap">Layout #1</span>
                    <CloseIcon />
                </div>
                <div className="flex h-[43px] w-[60px] items-center justify-center rounded-tr-[5px] border-2 border-l-0 border-[#bdbdbd] bg-[#e6e6e6]">+</div>
                <div className="h-[2px] flex-1 bg-[#bdbdbd]" />
            </div>
            <ViewToolbar />
            <div className="mr-[2px] h-[1154px] border-[3px] border-[#0000ff] ml-[1px]">
                <div className="relative h-full overflow-hidden border-2 border-[#c9cbe0] bg-[#52576e]">
                    <div className="ml-[349px] mt-[86px]"><FluxPlot /></div>
                    <OrientationAxes />
                    <ColorLegend />
                </div>
            </div>
        </main>
    );
}

export default function App() {
    return (
        <div className="relative h-[1256px] w-[2238px] overflow-hidden bg-[#eeeeee] font-['DejaVu_Sans'] text-[21px] leading-6 text-[#222]">
            <div className="h-[3px] border-b-2 border-[#bfbfbf] bg-[#e9e9e9]" />
            <div className="flex h-[1253px]">
                <LeftDock />
                <RenderPane />
            </div>
            {/* hand-drawn marker on the Psi array */}
            <svg width="190" height="130" viewBox="0 0 190 130" className="absolute left-[110px] top-[895px]" fill="none" stroke="#ff0428" strokeWidth="13" strokeLinecap="round" strokeLinejoin="round">
                <path d="M175.500 112L13 25M56.500 12.500L13 25L26.500 70" />
            </svg>
        </div>
    );
}
